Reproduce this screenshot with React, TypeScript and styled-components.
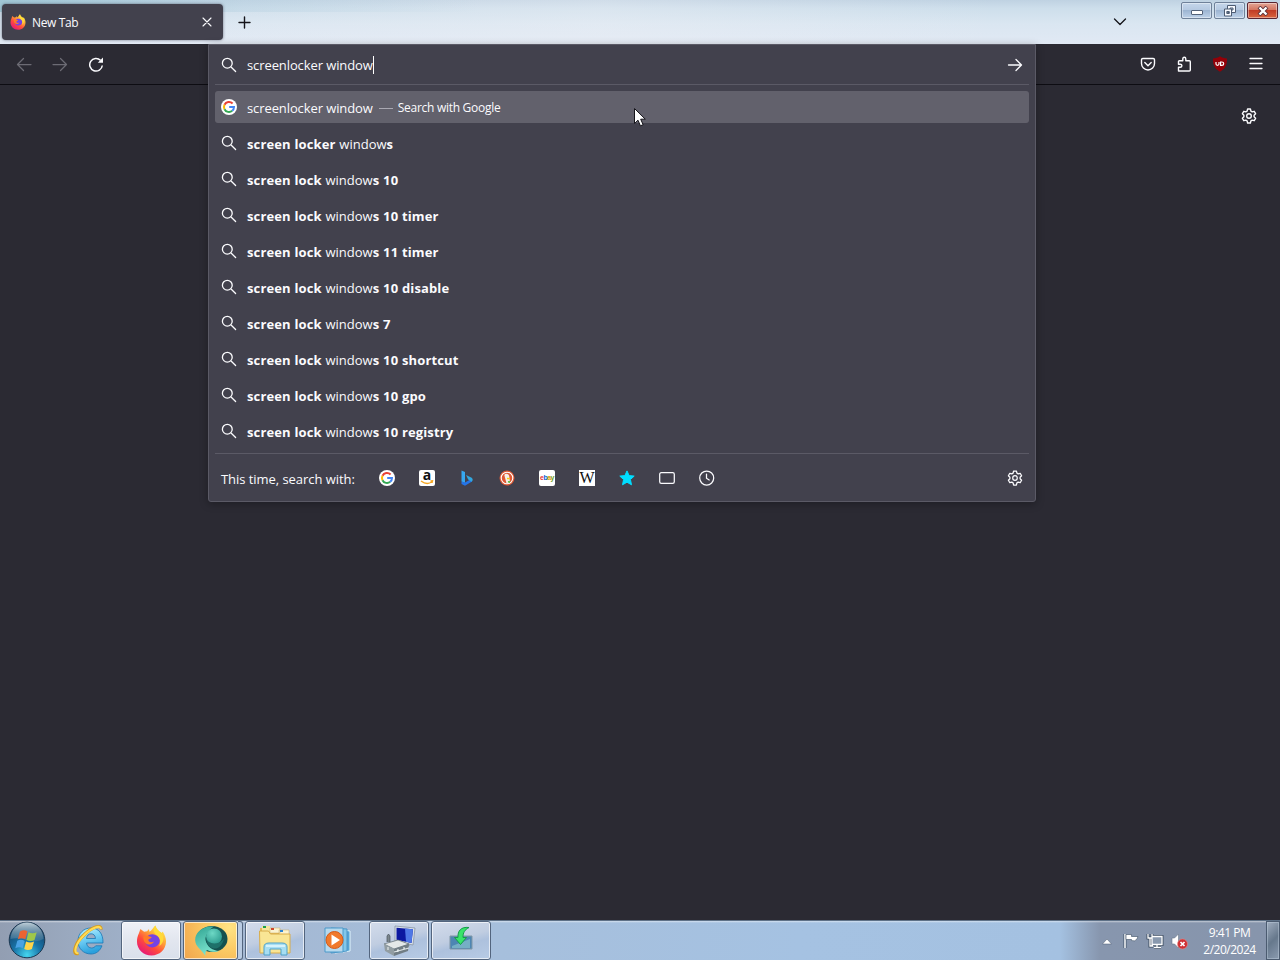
import React from 'react';
import styled, { createGlobalStyle } from 'styled-components';

const GlobalStyle = createGlobalStyle`
  * {
    box-sizing: border-box;
  }

  body {
    margin: 0;
    overflow: hidden;
    background: #2b2a33;
    font-family: 'Open Sans', 'Noto Sans', sans-serif;
  }

  svg {
    display: block;
    flex: none;
  }
`;

const Desktop = styled.div`
  position: relative;
  display: flex;
  flex-direction: column;
  width: 1280px;
  height: 960px;
  overflow: hidden;
`;

const TitleBar = styled.header`
  display: flex;
  align-items: flex-start;
  height: 44px;
  padding: 4px 0 0 2px;
  background:
    linear-gradient(90deg, rgba(150, 195, 210, 0.75) 0, rgba(175, 205, 222, 0.35) 240px, transparent 480px) 0 0 / 100% 12px no-repeat,
    linear-gradient(90deg, transparent 0, rgba(240, 241, 246, 0.35) 600px, transparent 1000px),
    linear-gradient(180deg, #bfd2e2 0, #cddeeb 8px, #dae6f1 24px, #e1e9f4 44px);
`;

const Tab = styled.div`
  display: flex;
  align-items: center;
  width: 221px;
  height: 36px;
  padding: 0 8px;
  border-radius: 4px;
  background: #42414d;
  box-shadow: 0 0 3px rgba(40, 40, 60, 0.6);
`;

const TabTitle = styled.span`
  flex: 1;
  margin: 1px 0 0 6px;
  color: #fbfbfe;
  font-size: 12px;
  letter-spacing: -0.35px;
`;

const NewTabButton = styled.div`
  margin: 12px 0 0 13px;
`;

const TabsMenu = styled.div`
  margin: 13px 53px 0 auto;
`;

const WindowControls = styled.div`
  display: flex;
  gap: 2px;
  margin-top: -2px;
  padding-right: 2px;
`;

const ControlButton = styled.div<{ $close?: boolean }>`
  display: flex;
  align-items: center;
  justify-content: center;
  width: 31px;
  height: 17px;
  border: 1px solid ${(p) => (p.$close ? '#5a2430' : '#6f8199')};
  border-radius: 2px;
  background: ${(p) =>
    p.$close
      ? 'linear-gradient(180deg, #e3a595 0, #d47560 46%, #c13c25 50%, #d9653f 100%)'
      : 'linear-gradient(180deg, #c5d6ea 0, #b5c9e1 46%, #9db5d2 50%, #bdd1e8 100%)'};
  box-shadow: inset 0 0 0 1px rgba(255, 255, 255, 0.4);
`;

const NavBar = styled.nav`
  display: flex;
  align-items: center;
  justify-content: space-between;
  height: 41px;
  padding: 0 16px;
  border-bottom: 1px solid #0d0c12;
  background: #2b2a33;
`;

const NavGroup = styled.div`
  display: flex;
  align-items: center;
  gap: 20px;
`;

const Page = styled.main`
  display: flex;
  flex: 1;
  justify-content: flex-end;
  align-items: flex-start;
  padding: 23px 23px 0;
  background: #2b2a33;
`;

const UrlPopup = styled.section`
  position: absolute;
  top: 44px;
  left: 208px;
  width: 828px;
  height: 458px;
  padding: 0 6px;
  border: 1px solid #5b5a66;
  border-radius: 0 0 3px 3px;
  background: #42414d;
  box-shadow: 0 2px 8px rgba(0, 0, 0, 0.3);
  color: #fbfbfe;
`;

const InputRow = styled.div`
  display: flex;
  align-items: center;
  height: 40px;
  padding: 0 6px;
  border-bottom: 1px solid #5b5a66;
`;

const QueryText = styled.span`
  margin: 1px 0 0 10px;
  font-size: 13px;
  letter-spacing: -0.1px;
  white-space: pre;
`;

const Caret = styled.i`
  width: 1px;
  height: 18px;
  background: #ffffff;
`;

const GoButton = styled.div`
  margin-left: auto;
`;

const ResultList = styled.div`
  display: flex;
  flex-direction: column;
  gap: 4px;
  height: 368px;
  padding-top: 6px;
`;

const ResultRow = styled.div<{ $selected?: boolean }>`
  display: flex;
  align-items: center;
  height: 32px;
  flex: none;
  padding: 0 6px;
  border-radius: 3px;
  background: ${(p) => (p.$selected ? '#62616c' : 'transparent')};
`;

const ResultText = styled.span<{ $typed?: boolean }>`
  margin: 2px 0 0 10px;
  font-size: 13px;
  letter-spacing: ${(p) => (p.$typed ? -0.1 : 0)}px;
  white-space: pre;

  b {
    font-weight: 700;
    letter-spacing: 0.12px;
    word-spacing: 0.3px;
  }
`;

const Dash = styled.i`
  width: 14px;
  height: 1px;
  margin: 2px 5px 0 6px;
  background: #a9a8b2;
`;

const ResultAction = styled.span`
  margin-top: 1px;
  font-size: 12px;
  letter-spacing: -0.28px;
`;

const OneOffs = styled.footer`
  display: flex;
  align-items: center;
  height: 48px;
  padding: 0 6px;
  border-top: 1px solid #5b5a66;
`;

const OneOffLabel = styled.span`
  width: 158px;
  margin-top: 2px;
  font-size: 13px;
  letter-spacing: -0.05px;
  white-space: nowrap;
`;

const EngineList = styled.div`
  display: flex;
  flex: 1;
  gap: 24px;
`;

const LetterTile = styled.span<{ $size: number; $serif?: boolean }>`
  display: flex;
  align-items: center;
  justify-content: center;
  width: 16px;
  height: 16px;
  border-radius: ${(p) => (p.$serif ? 0 : 2)}px;
  background: #ffffff;
  color: #111111;
  font: ${(p) => (p.$serif ? 400 : 700)} ${(p) => p.$size}px/16px
    ${(p) => (p.$serif ? "'Liberation Serif', serif" : "'Liberation Sans', sans-serif")};
`;

const Ebay = styled(LetterTile)`
  letter-spacing: -0.5px;
`;

const Amazon = styled(LetterTile)`
  position: relative;
  padding-bottom: 5px;
  font-family: 'Open Sans', sans-serif;

  svg {
    position: absolute;
    left: 1px;
    bottom: 1px;
  }
`;

const Tint = styled.span<{ $color: string }>`
  color: ${(p) => p.$color};
`;

const Cursor = styled.div`
  position: absolute;
  top: 107px;
  left: 633px;
`;

const Taskbar = styled.div`
  display: flex;
  align-items: stretch;
  height: 40px;
  border-top: 1px solid #5e7187;
  background:
    linear-gradient(180deg, rgba(255, 255, 255, 0.5) 0, transparent 2px),
    linear-gradient(90deg, #929eb2 0, #9aa9bf 70px, #a3b6d0 180px, #a6bfdc 500px, #a5c2e2 800px, #a4c1e1 1060px, #8796ae 1100px, #8795ac 1265px);
`;

const TaskSlot = styled.div<{ $width: number }>`
  display: flex;
  align-items: center;
  justify-content: center;
  width: ${(p) => p.$width}px;
  padding-bottom: 1px;
`;

const taskFill = {
  bright: 'linear-gradient(180deg, #eef1f7 0, #e2e6ef 50%, #d9e0eb 100%)',
  orange: 'radial-gradient(circle at 85% 15%, #ffe384 0, #fbc862 45%, #f0a44d 100%)',
  glass: 'linear-gradient(165deg, #d3dceb 0, #c0cde1 45%, #adc1dd 60%, #b7cbe5 100%)',
};

const TaskButton = styled.div<{ $fill: keyof typeof taskFill; $width?: number }>`
  display: flex;
  align-items: center;
  justify-content: center;
  width: ${(p) => p.$width ?? 60}px;
  height: 39px;
  margin-right: 2px;
  border: 1px solid #53657e;
  border-radius: 3px;
  background: ${(p) => taskFill[p.$fill]};
  box-shadow: inset 0 0 0 1px rgba(255, 255, 255, 0.65);
`;

const StackEdge = styled.div`
  width: 5px;
  height: 39px;
  margin: 0 2px 0 -2px;
  border: solid #53657e;
  border-width: 1px 1px 1px 0;
  border-radius: 0 3px 3px 0;
  background: #b9cbe2;
`;

const Tray = styled.div`
  display: flex;
  align-items: center;
  margin-left: auto;
`;

const TrayIcons = styled.div`
  display: flex;
  align-items: center;
  gap: 6px;
`;

const Clock = styled.div`
  width: 72px;
  margin-left: 5px;
  padding: 1px 1px 0 0;
  color: #ffffff;
  font-size: 12px;
  line-height: 17px;
  letter-spacing: -0.5px;
  text-align: center;
`;

const ShowDesktop = styled.div`
  align-self: stretch;
  width: 14px;
  border: 1px solid #4b5b70;
  background: linear-gradient(135deg, #a0adbf 0, #66788c 50%, #8b9bb0 100%);
  box-shadow: inset 0 0 0 1px rgba(200, 215, 230, 0.4);
`;

interface IconProps {
  d: string;
  size?: number;
  color?: string;
  weight?: number;
}

const LineIcon = ({ d, size = 16, color = '#fbfbfe', weight = 1.25 }: IconProps) => (
  <svg width={size} height={size} viewBox="0 0 16 16" fill="none" stroke={color} strokeWidth={weight} strokeLinecap="round" strokeLinejoin="round">
    <path d={d} />
  </svg>
);

const SEARCH = 'M11.2 6.2a4.9 4.9 0 1 1-9.8 0a4.9 4.9 0 0 1 9.8 0ZM9.8 9.8l4.8 4.700';
const GEAR =
  'M6.6 1h2.8l.5 2.100 1.300.8 2-.6 1.400 2.400-1.500 1.500v1.600l1.500 1.500-1.400 2.400-2-.6-1.300.8-.5 2.100H6.6l-.5-2.100-1.300-.8-2 .6-1.400-2.400 1.500-1.500V7.200L1.400 5.700l1.400-2.400 2 .6 1.300-.8ZM10.300 8a2.300 2.300 0 1 1-4.600 0a2.300 2.300 0 0 1 4.600 0Z';

const GoogleIcon = () => (
  <svg width="16" height="16" viewBox="0 0 16 16" fill="none" strokeWidth="2">
    <circle cx="8" cy="8" r="8" fill="#fff" />
    <path d="M11.600 4.500A5 5 0 0 0 3.500 5.800" stroke="#ea4335" />
    <path d="M3.500 5.800a5 5 0 0 0 0 4.400" stroke="#fbbc05" />
    <path d="M3.500 10.200a5 5 0 0 0 7.700 1.600" stroke="#34a853" />
    <path d="M11.200 11.800A5 5 0 0 0 13 8H8.200" stroke="#4285f4" />
  </svg>
);

const FirefoxIcon = ({ size }: { size: number }) => (
  <svg width={size} height={size} viewBox="0 0 32 32">
    <defs>
      <linearGradient id={`fox${size}`} x1=".85" y1=".05" x2=".2" y2=".95">
        <stop offset="0" stopColor="#fff44f" />
        <stop offset=".35" stopColor="#ffa436" />
        <stop offset=".65" stopColor="#ff4b3d" />
        <stop offset="1" stopColor="#e5177b" />
      </linearGradient>
    </defs>
    <path
      d="M3 8.500 4.500 4l3.900 3 3-.5 2-2.500.4 3C16 6 17.500 3 20 .5c.1 2.800 2 4.500 4 6.200l2.500 1.500 1-1.500c2 3 3.500 6.500 3.500 10.200C31 25.600 24.300 31.500 16 31.500S1 25.200 1 17c0-3.200.7-5.800 2-8.500Z"
      fill={`url(#fox${size})`}
    />
    <path d="M11 13c1.800-3.300 5.500-4.200 9-2.800 4.800 1.800 5.400 5.700 3.800 9-1.600 3.500-6.500 5.100-10.200 3.200-2.800-1.400-4.300-4-4.200-6.200Z" fill="#7542e5" />
    <path d="M7.500 11.800c2.800-1 6.100-.3 8.700.7-.5 1.500-2.200 1.700-3.500 2.500-.3 2.400 2.700 3.700 5.900 2.100-1.600 3.300-6 4.100-8.800 1.500-1.400-1.300-2.400-3.700-2.300-6.800Z" fill="#ff7a27" />
    <path d="M20 .5c-3.500 4.300-1.500 7.700 1.800 10.200 3.500 3.100 3.900 7.300 2.200 11.100 5.400-4 5.200-9.800 2.500-13.600-2.800-2-5.500-4.200-6.500-7.700Z" fill="#ffda38" />
  </svg>
);

const UblockIcon = () => (
  <svg width="16" height="16" viewBox="0 0 16 16">
    <path d="M8 .3c2 1.400 4 2 7 2.200C15.300 8.500 13.300 13 8 15.700 2.700 13 .7 8.500 1 2.500 4 2.300 6 1.700 8 .3Z" fill="#930008" />
    <path d="M4 6v2.100q0 1.200 1.500 1.200T7 8.100V6" fill="none" stroke="#fff" strokeWidth="1.200" />
    <path d="M8.600 6v3.300h1.200q1.900 0 1.900-1.650T9.800 6Z" fill="none" stroke="#fff" strokeWidth="1.200" />
  </svg>
);

const BingIcon = () => (
  <svg width="16" height="16" viewBox="0 0 16 16">
    <path d="M2.500.5 6 2v11l-3.500-1.500Z" fill="#36a8f0" />
    <path d="m2.500 11.500 3.500 1 7-4v3L6 15.700l-3.500-1.600Z" fill="#2474e8" />
    <path d="m7 5 5.700 2.800q2 2.200 0 4L9.200 9.500Z" fill="#32a7df" />
  </svg>
);

const DuckIcon = () => (
  <svg width="16" height="16" viewBox="0 0 16 16">
    <circle cx="8" cy="8" r="7.500" fill="#de5833" />
    <circle cx="8" cy="8" r="5.800" fill="none" stroke="#fff" strokeWidth="1.100" />
    <path d="M5.300 4.900c1-1.700 4.300-1.300 4.900 1.200l.8 6.400-3.400 1.200Z" fill="#f4efe6" />
    <path d="m8 7.800 3 .2-1 1.200-2 .1Z" fill="#fdd20a" />
    <path d="m9 11 2.300.1-.4 1.800-2-.5Z" fill="#65bc46" />
  </svg>
);

const StartOrb = () => (
  <svg width="38" height="38" viewBox="0 0 38 38">
    <defs>
      <radialGradient id="orb" cx=".5" cy=".92" r=".85">
        <stop offset="0" stopColor="#45d6ef" />
        <stop offset=".45" stopColor="#1875a9" />
        <stop offset="1" stopColor="#153d63" />
      </radialGradient>
      <linearGradient id="orbShine" x2="0" y2="1">
        <stop offset="0" stopColor="#dbe9ee" stopOpacity=".85" />
        <stop offset="1" stopColor="#6f93a7" stopOpacity=".3" />
      </linearGradient>
    </defs>
    <circle cx="19" cy="19" r="17.800" fill="url(#orb)" stroke="#1c3851" />
    <path d="M2.500 18a16.500 16.500 0 0 1 33 0q-7 4-16.500 1T2.500 18Z" fill="url(#orbShine)" />
    <path d="M12 10.500q4-2.500 7.400-.2l-2.100 8q-3.700-2.100-7.400 0Z" fill="#ec6432" />
    <path d="M20.500 11.300q4 2.100 8.200 0L26.500 19q-3.900 2.100-8 0Z" fill="#9fc84a" />
    <path d="M9.300 19.700q3.800-2.100 7.400.2l-2 7.300q-3.500-2.100-7.400.1Z" fill="#49a2e4" />
    <path d="M18.100 20.500q3.900 2.200 8 0l-2.200 7.500q-4 2-7.700 0Z" fill="#ffd44a" />
  </svg>
);

const ExplorerIcon = () => (
  <svg width="34" height="34" viewBox="0 0 34 34" fill="none">
    <defs>
      <linearGradient id="ieBlue" x2=".3" y2="1">
        <stop offset="0" stopColor="#bff3ff" />
        <stop offset=".5" stopColor="#6fcdf4" />
        <stop offset="1" stopColor="#2ba0dc" />
      </linearGradient>
    </defs>
    <path
      fillRule="evenodd"
      d="M32 20H15.500c.4 3.400 2.600 5 5 5 2 0 3.300-.8 4.200-2.200H31C29 28 25 31 20 31 12.500 31 7 25.500 7 18S12.500 5 20 5s12.300 5.500 12 15ZM15.500 15.500h9c-.3-3.200-2-4.700-4.400-4.700s-4.100 1.500-4.600 4.700Z"
      fill="url(#ieBlue)"
      stroke="#1976b5"
      strokeWidth=".8"
    />
    <path d="M7.500 30.500C.5 32.500 3.500 20.500 13 12 21 4 30.500.5 30 6.500" stroke="#d79b1b" strokeWidth="3.200" />
    <path d="M7.500 30.200C1.500 31 4.500 20.500 13 12.200 21 4.300 29.800 1.500 29.800 6" stroke="#ffdb55" strokeWidth="2.100" />
  </svg>
);

const TealIcon = () => (
  <svg width="34" height="34" viewBox="0 0 34 34">
    <defs>
      <radialGradient id="tealBall" cx=".4" cy=".3" r=".75">
        <stop offset="0" stopColor="#6dd8c5" />
        <stop offset="1" stopColor="#2a9a8e" />
      </radialGradient>
      <linearGradient id="tealWing" x2=".4" y2="1">
        <stop offset="0" stopColor="#2fa392" />
        <stop offset="1" stopColor="#7de5cf" />
      </linearGradient>
    </defs>
    <ellipse cx="18" cy="15" rx="15.500" ry="13" fill="#14514f" />
    <path d="M14 2.500C4 5 0 12 1.500 18.500 3 24 8 26 11.500 32c-.5-3 0-4.500 1.500-6 4 2 8 2.500 12 1-6-.5-12-4-13.500-11C11 12 15 5 20 2.500Z" fill="url(#tealWing)" />
    <circle cx="20" cy="12.500" r="8" fill="url(#tealBall)" />
    <path d="M12 14c2 6 11 8 18 1-2 7-6 10-10 9.500S12.500 20 12 14Z" fill="#1e716a" />
  </svg>
);

const FolderIcon = () => (
  <svg width="34" height="34" viewBox="0 0 34 34">
    <path d="M2 4h10l2 2h17v21H2Z" fill="#e4bb57" />
    <path d="M4 2h8v6H4Z" fill="#f5e59c" />
    <path d="M12 4h10v5H12ZM21 6h10v5H21Z" fill="#fbf3d0" stroke="#c9a95c" strokeWidth=".5" />
    <path d="M5 3h3" stroke="#1da04a" strokeWidth="2" />
    <path d="M13 5h3" stroke="#ce4a2e" strokeWidth="2" />
    <path d="M22 7h3" stroke="#2c83cf" strokeWidth="2" />
    <path d="M1.500 7h9l2 3H32v19H2Z" fill="#f9e594" stroke="#d8ac4b" />
    <path d="M6 31v-8q0-4 5-4h13q5 0 5 4v8h-6v-6H12v6Z" fill="#a7def2" stroke="#4fa1c9" />
    <path d="M8 22h19" stroke="#e4f8ff" strokeWidth="1.500" />
  </svg>
);

const PlayerIcon = () => (
  <svg width="34" height="30" viewBox="0 0 34 30">
    <path d="m14 4 15 2v20l-15 2Z" fill="#56a5d6" stroke="#dff5fd" />
    <path d="m10 3 16 1v22l-16 2Z" fill="#82c7ea" stroke="#4c96c7" />
    <path d="M4 3h18v24H4Z" fill="#b7d9ed" stroke="#4a99ca" />
    <circle cx="13.500" cy="15" r="8.500" fill="#f1792b" stroke="#d45b1a" />
    <path d="m10.500 9.500 8.500 5.500-8.500 5.500Z" fill="#fff" />
  </svg>
);

const ComputerIcon = () => (
  <svg width="34" height="34" viewBox="0 0 34 34">
    <path d="m13 2 20 2-2 17-18-4Z" fill="#d9e1ea" stroke="#8996a4" strokeWidth=".8" />
    <path d="m14.500 3.700 16.500 1.600-1.500 13.700-15-3.300Z" fill="#0c18a0" />
    <path d="m23 4.500 8 .8L29.500 19l-5.500-1.200Z" fill="#4f78e6" />
    <path d="m17 19 3-2 8 4-3 3Z" fill="#8b959b" />
    <path d="M5 18v-6l1.500-2L8 12v6" fill="#7b868d" stroke="#47535b" strokeWidth=".7" />
    <path d="m2 20 14-4 11 4-15 5Z" fill="#e4e8e8" stroke="#5f6b71" strokeWidth=".7" />
    <path d="m2 20 10 5v7L3 27Z" fill="#929da2" />
    <path d="m12 25 15-5-1 7-14 5Z" fill="#717d84" />
    <path d="m12 28 15-4M6 23v3M16 25v3M22 23v3" stroke="#dfe6e7" strokeWidth="1.200" />
  </svg>
);

const InstallIcon = () => (
  <svg width="28" height="32" viewBox="0 0 28 32">
    <path d="M3 11h22v13H3Z" fill="#4d86b3" stroke="#8197a6" />
    <path d="m5 21 18-7v9H5Z" fill="#75afc5" />
    <path d="M22 2.500C14 1.500 10.500 6 11 12.500H7.500l6 7 6-7H16C16 7.500 17.500 5 22 2.500Z" fill="#37e46a" stroke="#169b4b" />
  </svg>
);

const FlagIcon = () => (
  <svg width="18" height="18" viewBox="0 0 18 18">
    <path d="M3 2v14" stroke="#3f5268" strokeWidth="3" />
    <path d="M3 2v14" stroke="#fff" strokeWidth="1.500" />
    <path d="M4 2.500h5.500V4.500h6.500l-1 2.500q-2 3-5.500 1.500V7.500H4Z" fill="#fff" stroke="#4f6074" strokeWidth=".7" />
  </svg>
);

const NetworkIcon = () => (
  <svg width="18" height="18" viewBox="0 0 18 18" fill="none">
    <path d="M6 4.500h10v8H6ZM8 15.500h7M11 13v2M2 2v4h4V2M4 6v8h3" stroke="#3c4c60" strokeWidth="3" />
    <path d="M6 4.500h10v8H6Z" fill="#8999ae" />
    <path d="M6 4.500h10v8H6ZM8 15.500h7M11 13v2M2 2v4h4V2M4 6v8h3" stroke="#fff" strokeWidth="1.300" />
  </svg>
);

const MutedIcon = () => (
  <svg width="19" height="18" viewBox="0 0 19 18">
    <path d="M2 6h2.500l4-4v14l-4-4H2Z" fill="#fff" stroke="#6a7789" strokeWidth=".6" />
    <circle cx="12.500" cy="12" r="5" fill="#cf3033" stroke="#e98a87" strokeWidth=".6" />
    <path d="m10.500 10 4 4m0-4-4 4" stroke="#fff" strokeWidth="1.700" />
  </svg>
);

const suggestions = [
  ['screen locker ', 's'],
  ['screen lock ', 's 10'],
  ['screen lock ', 's 10 timer'],
  ['screen lock ', 's 11 timer'],
  ['screen lock ', 's 10 disable'],
  ['screen lock ', 's 7'],
  ['screen lock ', 's 10 shortcut'],
  ['screen lock ', 's 10 gpo'],
  ['screen lock ', 's 10 registry'],
];

const BrowserTabs = () => (
  <TitleBar>
    <Tab>
      <FirefoxIcon size={16} />
      <TabTitle>New Tab</TabTitle>
      <LineIcon d="m4 4 8 8m0-8-8 8" weight={1.1} />
    </Tab>
    <NewTabButton>
      <LineIcon d="M3 6.500h11M8.500 1v11" color="#15141a" weight={1.4} />
    </NewTabButton>
    <TabsMenu>
      <LineIcon d="m2.500 2 5.500 5.500 5.500-5.500" color="#15141a" weight={1.3} />
    </TabsMenu>
    <WindowControls>
      <ControlButton>
        <svg width="12" height="9" viewBox="0 0 12 9">
          <rect x=".5" y="4.500" width="11" height="4" rx=".5" fill="#fff" stroke="#536279" />
        </svg>
      </ControlButton>
      <ControlButton>
        <svg width="14" height="12" viewBox="0 0 14 12" fill="#f7faff" stroke="#4d5c72">
          <path d="M4.500.5h8v7h-8ZM7 3h3v2H7Z" fillRule="evenodd" />
          <path d="M1.500 4h7v7h-7ZM3.800 6.500h2.500v2H3.800Z" fillRule="evenodd" />
        </svg>
      </ControlButton>
      <ControlButton $close>
        <svg width="12" height="10" viewBox="0 0 12 10">
          <path d="m2 1 8 8m0-8L2 9" stroke="#5a3038" strokeWidth="4" />
          <path d="m2.500 1.500 7 7m0-7-7 7" stroke="#fff" strokeWidth="2.400" />
        </svg>
      </ControlButton>
    </WindowControls>
  </TitleBar>
);

const Navigation = () => (
  <NavBar>
    <NavGroup>
      <LineIcon d="M15 8.500H1.500m6-6-6 6 6 6" color="#6c6b74" />
      <LineIcon d="M1 8.500h13.500m-6-6 6 6-6 6" color="#6c6b74" />
      <svg width="16" height="16" viewBox="0 0 16 16" fill="none" stroke="#fbfbfe" strokeWidth="1.500">
        <path d="M14.300 9.500A6.300 6.300 0 1 1 12.500 4.300" />
        <path d="M15 1.500v5.200h-5.200Z" fill="#fbfbfe" stroke="none" />
      </svg>
    </NavGroup>
    <NavGroup>
      <LineIcon d="M2.800 2.500h10.400q1.300 0 1.300 1.300v3.700a6.500 6.500 0 0 1-13 0V3.800q0-1.300 1.300-1.300ZM4.800 6.500 8 9.700l3.200-3.200" weight={1.4} />
      <LineIcon d="M2.500 15v-3.800h1.700q1.700 0 1.700-1.500T4.200 8.200H2.500V5.600q0-.8.8-.8h3.500V3q0-1.700 1.500-1.700T9.800 3v1.800h3.500q1 0 1 1V14q0 1-1 1Z" weight={1.4} />
      <UblockIcon />
      <LineIcon d="M2 2.500h12M2 7.500h12M2 12.500h12" weight={1.3} />
    </NavGroup>
  </NavBar>
);

const SearchPopup = () => (
  <UrlPopup>
    <InputRow>
      <LineIcon d={SEARCH} weight={1.3} />
      <QueryText>screenlocker window</QueryText>
      <Caret />
      <GoButton>
        <LineIcon d="M1.500 8h12.800M9 2.500 14.500 8 9 13.500" weight={1.3} />
      </GoButton>
    </InputRow>
    <ResultList>
      <ResultRow $selected>
        <GoogleIcon />
        <ResultText $typed>screenlocker window</ResultText>
        <Dash />
        <ResultAction>Search with Google</ResultAction>
      </ResultRow>
      {suggestions.map(([before, after]) => (
        <ResultRow key={before + after}>
          <LineIcon d={SEARCH} weight={1.3} />
          <ResultText>
            <b>{before}</b>window<b>{after}</b>
          </ResultText>
        </ResultRow>
      ))}
    </ResultList>
    <OneOffs>
      <OneOffLabel>This time, search with:</OneOffLabel>
      <EngineList>
        <GoogleIcon />
        <Amazon $size={14}>
          a
          <svg width="14" height="5" viewBox="0 0 14 5">
            <path d="M1 1q6 4.500 11 .8M10.500 1l2-.2-.5 2" fill="none" stroke="#f5a623" strokeWidth="1.400" />
          </svg>
        </Amazon>
        <BingIcon />
        <DuckIcon />
        <Ebay $size={7}>
          <Tint $color="#e53238">e</Tint>
          <Tint $color="#0064d2">b</Tint>
          <Tint $color="#d99a02">a</Tint>
          <Tint $color="#6f9d13">y</Tint>
        </Ebay>
        <LetterTile $size={16} $serif>W</LetterTile>
        <svg width="16" height="16" viewBox="0 0 16 16">
          <path d="m8 .9 2.100 4.700 5.100.5-3.800 3.400 1.100 5.300L8 12.200l-4.500 2.600 1.100-5.300L.8 6.100l5.100-.5Z" fill="#00ddff" stroke="#00ddff" strokeLinejoin="round" />
        </svg>
        <LineIcon d="M2.300 2.700h11.400q1.600 0 1.600 1.600v7.400q0 1.600-1.600 1.600H2.300Q.7 13.300.7 11.700V4.300Q.7 2.700 2.300 2.700Z" />
        <LineIcon d="M14.700 8A7 7 0 1 1 .7 8a7 7 0 0 1 14 0ZM7.500 4v4.300l2.700 1.700" />
      </EngineList>
      <LineIcon d={GEAR} />
    </OneOffs>
  </UrlPopup>
);

const WindowsTaskbar = () => (
  <Taskbar>
    <TaskSlot $width={54}><StartOrb /></TaskSlot>
    <TaskSlot $width={67}><ExplorerIcon /></TaskSlot>
    <TaskButton $fill="bright"><FirefoxIcon size={31} /></TaskButton>
    <TaskButton $fill="orange" $width={55}><TealIcon /></TaskButton>
    <StackEdge />
    <TaskButton $fill="glass"><FolderIcon /></TaskButton>
    <TaskSlot $width={62}><PlayerIcon /></TaskSlot>
    <TaskButton $fill="glass"><ComputerIcon /></TaskButton>
    <TaskButton $fill="glass"><InstallIcon /></TaskButton>
    <Tray>
      <TrayIcons>
        <svg width="18" height="18" viewBox="0 0 18 18">
          <path d="m4.500 12 4.500-5 4.500 5Z" fill="#fff" stroke="#4b5b70" strokeWidth=".5" />
        </svg>
        <FlagIcon />
        <NetworkIcon />
        <MutedIcon />
      </TrayIcons>
      <Clock>
        9:41 PM
        <br />
        2/20/2024
      </Clock>
      <ShowDesktop />
    </Tray>
  </Taskbar>
);

const App = () => (
  <Desktop>
    <GlobalStyle />
    <BrowserTabs />
    <Navigation />
    <Page>
      <LineIcon d={GEAR} weight={1.4} />
    </Page>
    <WindowsTaskbar />
    <SearchPopup />
    <Cursor>
      <svg width="15" height="22" viewBox="0 0 15 22">
        <path d="M1.500 1.500v15l3.500-3.300 2.400 5.600 2.700-1.100-2.400-5.500h4.600Z" fill="#fff" stroke="#15141a" />
      </svg>
    </Cursor>
  </Desktop>
);

export default App;
